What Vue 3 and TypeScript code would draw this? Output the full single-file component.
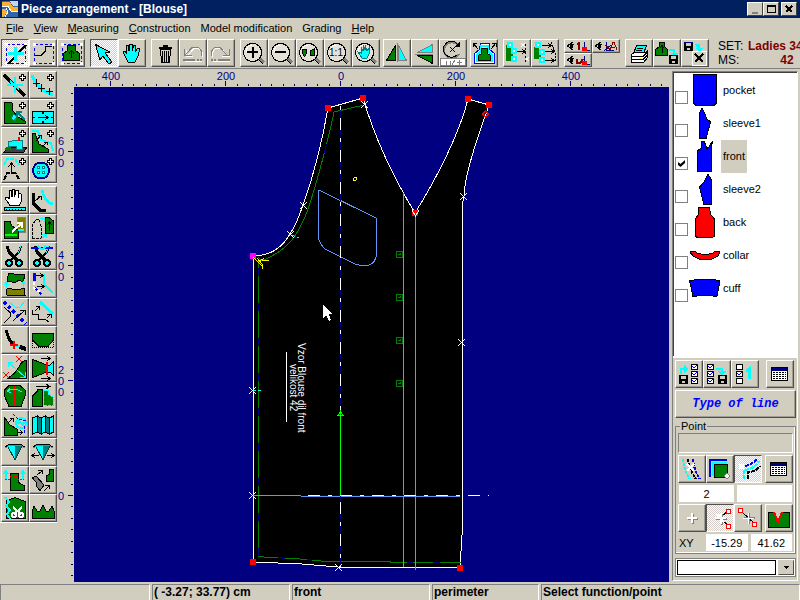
<script setup lang="ts">
import { computed, h, ref } from 'vue'

/** One painted layer of an icon: fill, stroke, stroke width, path data, optional dash pattern. */
type Layer = [fill: string, stroke: string, width: number, d: string, dash?: string]

const N = 'none'
const K = '#000000'
const C = '#00ffff'
const G = '#008000'
const R = '#ff0000'
const B = '#0000ff'
const W = '#ffffff'
const GY = '#808080'
const TEAL = '#008080'
const OLIVE = '#808000'
const NAVY = '#000080'
const MAROON = '#800000'

const plus: Layer = [W, K, 1, 'M20.5 3.5h2v2h2v2h-2v2h-2v-2h-2v-2h2z']
const frame: Layer[] = [
  [N, B, 1, 'M5.5 5.5h19v19h-19z', '3 2'],
  [W, N, 0, 'M4 4h3v3h-3zM23 4h3v3h-3zM4 23h3v3h-3zM23 23h3v3h-3z'],
]
const lens: Layer[] = [
  [N, GY, 3, 'M19 19l5 5'],
  [N, K, 1, 'M18 20l5 5'],
  ['#e4e2d8', K, 1, 'M12.5 4.5a9 9 0 1 0 .1 0z'],
  [N, W, 1, 'M6 13a7 7 0 0 1 6-7'],
]
const hand = 'M10 23L6 15L5 12L7 12L9 15L8 7L10 6L11 12L12 5L14 5L14 12L16 6L18 7L17 13L20 9L22 10L20 17L17 23z'
const disk = (x: number, y: number): Layer[] => [
  [K, N, 0, `M${x} ${y}h9v9h-9z`],
  ['#d1cec0', N, 0, `M${x + 2} ${y + 1}h5v3h-5zM${x + 3} ${y + 6}h3v2h-3z`],
]
const eye: Layer[] = [
  [N, K, 1, 'M9 3L3.500 7L9 11M4 6C6 4 8 5 10 6'],
  [K, N, 0, 'M6 5h3v4h-3z'],
]
const scissors = (c: string, rings: string): Layer[] => [
  [N, c, 3, 'M6 4L8 10L16 18'],
  [N, c, 2, 'M20 4L18 10L10 18'],
  [N, rings, 1, 'M20 4L17 11'],
  [rings, c, 2, 'M8 18a3 3 0 1 0 .1 0zM18 18a3 3 0 1 0 .1 0z'],
]
const dart: Layer[] = [
  [C, N, 0, 'M6 8L9 6L14 7V22z'],
  [TEAL, N, 0, 'M14 7L18 6L21 8L14 22z'],
  [N, '#004040', 1, 'M6.500 8L14 22L21 8'],
  [N, GY, 1, 'M4 10L9 7L14 8L19 7L24 10'],
  [N, K, 1, 'M4 9L9 6H19L24 9'],
]
const calendar: Layer[] = [
  [W, K, 1, 'M5.5 7.5h16v13h-16z'],
  [NAVY, N, 0, 'M6 8h15v3h-15z'],
  [N, K, 1, 'M7 12.5h13M7 14.5h13M7 16.5h13M7 18.5h13', '2 1'],
]
const ticks = (x: number): Layer[] => [
  [W, K, 1, `M${x}.5 4.5h6v5h-6zM${x}.5 11.5h6v5h-6zM${x}.5 18.5h6v5h-6z`],
]

const icons: Record<string, Layer[]> = {
  point: [...frame, [N, K, 2, 'M7 25L25 6'], [N, C, 3, 'M7 14.500h16M14.500 8v14']],
  curve: [...frame, [N, K, 1, 'M6 16.5H12L16.5 12V7.5H23']],
  piece: [...frame, [G, K, 1, 'M10.5 6.5h8v5l4 3v7h-16v-7l4-3z'], [N, K, 1, 'M14.5 19v-7M12 14.5l2.5-3l2.5 3']],
  select: [[C, K, 1, 'M5.5 5.5L20 13L15 14L22 23L19 25L13 17L10 21z']],
  pan: [[C, K, 1, hand]],
  trash: [
    [K, N, 0, 'M8 8h13v2h-13zM12 6h5v2h-5z'],
    ['#d1cec0', K, 1, 'M9.5 10.5h10l-1 13h-8z'],
    [N, K, 1, 'M11.500 12v11M13.500 12v11M15.500 12v11M17.500 12v11'],
  ],
  undo: [
    [N, W, 1, 'M8 17L15 9.5H20Q24.500 12 23 18M7 11v6h7M6 22.500h17'],
    [N, GY, 1, 'M6 16L13 8.500H19Q24 11 22 17M5.500 10v6.500h7'],
    [N, GY, 2, 'M4 21h12M18 21h2M21 21h2'],
  ],
  redo: [
    [N, W, 1, 'M21 17L14 9.5H9Q4.500 12 6 18M22 11v6h-7M6 22.500h17'],
    [N, GY, 1, 'M20 16L13 8.500H8Q3 11 5 17M22.500 10v6.500h-7'],
    [N, GY, 2, 'M4 21h2M7 21h2M11 21h12'],
  ],
  zoomIn: [...lens, [N, K, 2, 'M7 13h11M12.500 8v11']],
  zoomOut: [...lens, [N, K, 2, 'M7 13h11']],
  zoomAll: [...lens, [G, K, 1, 'M7 10h3l1 3l-2 4h-1l-2-4zM14 12l4-2v6h-4z']],
  zoomOne: lens,
  zoomPan: [...lens, [C, TEAL, 1, 'M10 19L6 13L9 14V8L11 12V6L13 11V6L15 12L17 9V15L15 19z']],
  mirrorH: [[G, K, 1, 'M3.5 21.500L12.500 6.500V21.500z'], [C, GY, 1, 'M15.500 6.500V21.500H23.500z'], [N, GY, 1, 'M14 4v19']],
  mirrorV: [[C, GY, 1, 'M6.500 13.500H21.500V5.500z'], [G, K, 1, 'M6.500 16.500H21.500V24.500z'], [N, GY, 1, 'M4 15h18']],
  rotate: [
    [N, GY, 2, 'M19 6A8 8 0 1 0 20 15'],
    [N, K, 1, 'M18 4.500A8 8 0 1 0 18 16M11 8l5 5M16 8l-5 5'],
    [K, N, 0, 'M21 2v6h-6z'],
    [W, GY, 1, 'M1 19.500h25v7h-25z'],
    [N, GY, 1, 'M7 22v4h4v-4M13 26l3-5M18 23h5M20.500 21v5'],
  ],
  offset: [
    [W, B, 1, 'M10.500 4.500h9v6l5 4v10h-20v-10l5-4z'],
    [N, C, 2, 'M11 7h7v5l4 4v6h-15v-6l4-4z'],
    [G, K, 1, 'M11.500 9.500h6v5l3 2v5h-12v-5l3-2z'],
    [N, K, 1, 'M3 4l5 6M3 8V4.500h4M26 4l-5 6M22 4.500h4V8'],
  ],
  moveA: [
    [G, N, 0, 'M3 6h5l2 6v10h-7z'],
    [W, C, 2, 'M5 4h4v4h-4zM9 10h4v4h-4zM9 18h4v4h-4z'],
    [N, K, 1, 'M14 12.500h8M19 10l3 2.500l-3 2.500'],
    [N, W, 1, 'M18 4l4 4M22 4l-4 4M22 18l4 4M26 18l-4 4'],
    [N, K, 1, 'M22.500 5v18', '2 2'],
  ],
  moveB: [
    [G, N, 0, 'M3 8h5l2 6v6h-7z'],
    [W, C, 2, 'M5 4h4v4h-4zM9 11h4v4h-4zM9 19h4v4h-4z'],
    [N, K, 1, 'M11 6.500h9M17 4l3 2.500l-3 2.500M14 12.500h9M20 10l3 2.500l-3 2.500M14 21.500h9M20 19l3 2.500l-3 2.500'],
    [N, K, 1, 'M20 3l4 10v9', '2 1'],
  ],
  eyeOne: [...eye, [N, MAROON, 2, 'M13 5l2-1v7'], [N, NAVY, 1, 'M20.500 3v8h5'], [R, N, 0, 'M18 8h5v4h-5z']],
  eyeAxis: [...eye, [N, NAVY, 1, 'M14.500 3v8h7M12 12l7-6'], [N, MAROON, 1, 'M13 6l7 6M18 11l3-8h1l3 8M19 8.500h4']],
  eyeBack: [...eye, [N, MAROON, 2, 'M13 6v4h3l3-4'], [N, NAVY, 1, 'M20.500 3v8h5'], [R, N, 0, 'M18 8h5v4h-5z']],
  print: [
    [C, K, 1, 'M11.500 6.500h10l-3 8h-10z'],
    [N, K, 1, 'M12 9h6M11 11.500h6'],
    [W, K, 1, 'M6.500 15.500l3-2h11l2-2v7l-4 5h-12z'],
    [N, K, 1, 'M7 17.500h11l4-4M7 20.500h11l4-4'],
    ['#ffff00', N, 0, 'M14 19h3v1h-3z'],
  ],
  saveOut: [[G, K, 1, 'M6.500 3.500h5v4l3 3v6h-12v-6l4-3z'], [N, K, 1, 'M9 14v-7M6.500 9.500l2.500-3l2.500 3'], [N, C, 2, 'M16 11h5v5'], [C, N, 0, 'M17 14h8l-4 4z'], ...disk(16, 16)],
  saveX: [...disk(3, 3), [NAVY, N, 0, 'M3 3h9v1h-9z'], [C, N, 0, 'M14 5h5v4h3l-4 4l-4-4h2z'], [N, GY, 1, 'M12 26.500h14.500v-14'], ['#d1cec0', W, 1, 'M11.500 12.500h14v14h-14z'], [N, K, 2, 'M14 15l8 8M22 15l-8 8']],
  // palette, top block
  addPoint: [[N, K, 3, 'M3 4L24 25'], [N, C, 2, 'M6 14h16M14 6v16M9 10l9 8'], plus],
  addCurve: [[N, C, 3, 'M3 4C7 15 12 19 24 24'], [N, K, 1, 'M4 12h7M7.500 8v8M9 17h7M12.500 13v8M17 20h7M20.500 17v7'], plus],
  addDart: [[G, K, 1, 'M3.500 3.500H11L12 12L17 18L24 22V24.500H3.500z'], [C, TEAL, 1, 'M10 19l3-4l3 3l-3 4z'], [N, TEAL, 2, 'M24 21L16 13M16 18v-5h5'], plus],
  addStrip: [[C, K, 1, 'M3.500 12.500H13l1 2l1-2H24.500V24.500H15l-1-2l-1 2H3.500zM3 18.500h3M22 18.500h3'], [N, K, 1, 'M9 18.500h10M16 16l3 2.500l-3 2.500'], plus],
  sew: [['#404040', K, 1, 'M7 20L3 25H23L26 20z'], [C, TEAL, 1, 'M7.500 14.500L15 13.500H21.500V22.500H15V19.500H7.500z'], [G, N, 0, 'M5 20h5v3h-6z'], [R, N, 0, 'M17 10h2v4h-2z'], plus],
  addSeam: [[G, K, 1, 'M3.500 6.500H6L10 17L19 22V25H3.500z'], [N, C, 2, 'M3 4H9L12 13L22 16L24 24'], [N, K, 1, 'M7 14l5-6M8.500 8H12v4M13 20l5-5M14.500 15H18v3'], plus],
  dartCopy: [[N, C, 2, 'M3 10L6 4H14L18 10', '4 1'], [N, K, 2, 'M3 25L6 18H14L18 24', '5 1'], [N, K, 1, 'M10.500 17V9M7 12l3.500-4l3.500 4'], plus],
  button: [[C, NAVY, 2, 'M12 7.500a8 8 0 1 0 .1 0z'], [W, TEAL, 1, 'M8.500 11.500h2v2h-2zM13.500 11.500h2v2h-2zM8.500 16.500h2v2h-2zM13.500 16.500h2v2h-2z'], plus],
  // palette, lower block
  measure: [[W, K, 1, 'M9 19.500L4.500 13V11H7L8 13V5L10 4.500L11 11V3H13.500V11L15 4H17V12L18 7L20 8V16L18 19.500z'], [C, K, 1, 'M3.500 21.500h21v3h-21z'], [N, K, 1, 'M5 23.500h18', '1 2']],
  corner: [[N, K, 3, 'M4 7V17L11 24H17'], [N, C, 3, 'M13 4C15 13 18 17 24 18'], [N, K, 1, 'M6 15l6-5M8.500 10H12v4']],
  swap: [[OLIVE, GY, 1, 'M16.500 3.500H24.500V18.500H16.500z'], [G, K, 1, 'M3.500 7.500H9L11 12L17 16V24.500H3.500z'], [C, N, 0, 'M17 15h6v2h-6z'], ['#00ff00', N, 0, 'M4 20h12v2h-12z'], [N, W, 2, 'M11 18L21 9M16 9h5v5']],
  copyPiece: [[N, K, 1, 'M3.500 24.500V11L7 5.500H10L12 12V24.500z', '3 1'], [G, K, 1, 'M16.500 3.500H20L24.500 7V19.500H16.500z'], [N, K, 1, 'M20.500 17V8M18 11l2.500-3l2.500 3'], [N, C, 1, 'M10 9l4-4M11 4.500H15V8M12 25l5-4M13 20.500H17V24']],
  cut: scissors(K, C),
  cutLine: [...scissors(K, C), [N, B, 2, 'M2 6h22'], [N, C, 2, 'M9 4l4 4M17 4l-4 4']],
  mirrorPiece: [[G, K, 1, 'M7.500 3.500L24 5L22 12L18 10L14 12.500L6 11z'], [OLIVE, K, 1, 'M5.500 19.500L8 18L14 20L23 18.500V21L24 25H6z'], [N, C, 1, 'M5.500 18v-6M3 15l2.500-3l2.500 3M22.500 18v-6M20 15l2.500-3l2.500 3']],
  moveLine: [[N, B, 3, 'M5 3v8'], [N, B, 2, 'M6 18L13 25', '3 3'], [N, W, 2, 'M5 12v6L11 22', '3 2'], [N, C, 2, 'M15 4V14L24 23'], [N, K, 1, 'M7 5.500h7M11 3l3 2.500l-3 2.500M8 16.500h7M12 14l3 2.500l-3 2.500']],
  axis: [[N, B, 4, 'M3 4L25 26', '3 3'], [N, C, 1, 'M8 4L14 9H19L24 3'], [N, K, 1, 'M3 9L9 14.500V19L3 25M12 23L24 12M19 12.500h5V17']],
  parallel: [[N, C, 3, 'M11 4L24 16'], [N, K, 1, 'M3.500 12V16.500H9V21.500H16.500L20 24M6 13l4-4M6.500 8.500H10.500V12M18 20l4-4M18 16.500H22.500V20']],
  extend: [[N, K, 3, 'M5 4C7 10 8 15 12 18'], [N, C, 2, 'M14 20h8'], [N, R, 2, 'M13 15v8M9 19h8'], [K, N, 0, 'M19 19L25 21V25L18 23z']],
  hem: [[G, K, 1, 'M3.500 7.500H24.500V14L19 20.500H10L3.500 14z'], [N, K, 1, 'M3.500 15V21.500H24.500V15', '1 1']],
  stretch: [[G, K, 1, 'M25 6.500C17 7 20 18 6 24.500H25z'], [N, C, 1, 'M7 8L24 23M7 13V8H12M24 18V23.500H19'], [N, R, 1, 'M15 2l6 6M21 2l-6 6M2 18l6 6M8 18l-6 6']],
  gather: [[G, K, 1, 'M3.500 5.500L18 11V18L3.500 23.500z'], [C, K, 1, 'M18 11H21L24.500 8V21L21 18H18z'], [N, R, 2, 'M18 8v13'], [N, K, 1, 'M12 4.500h9M18 2l3 2.500l-3 2.500M12 24.500h9M18 22l3 2.500l-3 2.500']],
  sleeve: [[G, K, 1, 'M8 3.500H19L24 8V14L20 24.500H8L3.500 14V8z'], [N, C, 1, 'M6 9Q14 5 21 10M9 6L6 9L10 11'], [N, R, 2, 'M14 4v20', '3 1']],
  widen: [[G, K, 1, 'M3.500 24.500V14L8 9.500V7.500H13V24.500z'], [G, C, 1, 'M14.500 8.500H19V12L24 15V23.500H14.500z', '3 1'], [N, K, 1, 'M7 4.500h14M17 2l4 2.500l-4 2.500']],
  detail: [[G, K, 1, 'M3.500 7.500L9 15L16 19V25H3.500z'], [N, C, 2, 'M20 8a5 5 0 1 0 .1 0zM15 13h10M17 10l6 6'], [N, B, 1, 'M12 4L17 9L25 11M23.500 16V24', '3 1'], [N, K, 1, 'M8 12l4-4M8.500 8.500H12.500V12M17 22.500h4M19 20l2 2.500l-2 2.500']],
  pleats: [[C, K, 1, 'M3.500 8L8 6V22L3.500 24zM12.500 8L16 6V22L12.500 24zM20.500 8L24.500 6V22L20.500 24z'], [TEAL, K, 1, 'M8 6L12.500 8V24L8 22zM16 6L20.500 8V24L16 22z']],
  dart,
  dartTurn: [...dart, [N, K, 1, 'M10 17.500H3M6 15l-3 2.500l3 2.500M18 17.500H25M22 15l3 2.500l-3 2.500']],
  lengthen: [[G, K, 1, 'M9.500 7.500H17V16L23.500 20V24.500H9.500z'], [N, R, 1, 'M4 13.500h19M9 10.500h9', '2 1'], [N, C, 2, 'M5 13V5M22 13V5'], [C, N, 0, 'M2 8l3-5l3 5zM19 8l3-5l3 5z']],
  rotatePiece: [[GY, K, 1, 'M3.500 12L7 10L15 19L11 24.500L7 20V16z'], [G, K, 1, 'M20.500 3.500H24.500V15.500H17V10L20.500 8z'], [N, K, 1, 'M8 9l5-4M9 4.500H13.500V8M15 25l5-5M16 19.500H20.500V23']],
  cutPiece: [[G, K, 1, 'M5.500 7L14 3.500L24 7.500V24.500H5.500z'], [N, C, 2, 'M4 3L8 8L5 12L9 16L6 20L9 25'], [N, W, 2, 'M12 13L20 20M21 13L13 20M13 19a2 2 0 1 0 .1 0M20 19a2 2 0 1 0 .1 0']],
  crown: [[G, K, 1, 'M3.500 24.500V17L5 12L8 17H11L14 11L17 17H20L23 12L25 17V24.500z']],
  // right panel
  loadSet: [...ticks(16), [N, B, 1, 'M17 6l2 2l4-4M17 13l2 2l4-4M17 20l2 2l4-4'], [N, C, 2, 'M6 14V9h4'], [C, N, 0, 'M9 5l5 4l-5 4z'], ...disk(4, 15)],
  saveSet: [...ticks(4), [N, B, 1, 'M5 6l2 2l4-4M5 13l2 2l4-4M5 20l2 2l4-4'], [N, C, 2, 'M13 9h6v3'], [C, N, 0, 'M14 11h9l-4 4z'], ...disk(15, 15)],
  oneSet: [...ticks(5), [N, B, 1, 'M6 13l2 2l4-4'], [N, C, 3, 'M15 11l3-2v10']],
  calendar,
  lines: [[N, C, 2, 'M5 4Q6 16 12 24', '3 1'], [N, K, 2, 'M10 4Q12 16 18 24', '3 1'], [N, B, 2, 'M15 4Q16 16 22 24', '3 1'], [N, W, 2, 'M9 9l7 7M16 9l-7 7']],
  layers: [[N, B, 2, 'M4 22V5H21'], [N, C, 2, 'M7 21V8H21'], [G, K, 1, 'M8.500 9.500h13v13h-13z'], [W, GY, 1, 'M21 18l3 3l-3 3l-3-3z']],
  fan: [[N, B, 2, 'M6 11Q16 12 23 4', '4 1'], [N, C, 2, 'M10 24V15Q20 14 25 6', '4 1'], [N, K, 2, 'M14 24V17Q22 17 26 11', '4 1'], [W, N, 0, 'M5 9h5v5h-5z']],
  plain: [[N, GY, 2, 'M15 10v10M10 15h10'], [N, W, 2, 'M14 9v10M9 14h10']],
  near: [[N, K, 1, 'M15 13L22 7M15 15L22 21'], [N, GY, 2, 'M10 15h11M16 10v11'], [N, W, 2, 'M9 14h11M15 9v11M11 10l7 8'], [W, R, 1, 'M20.500 5.500h4v4h-4zM20.500 20.500h4v4h-4z']],
  between: [[N, K, 1, 'M7 7L21 20'], [N, GY, 2, 'M15 9v11M10 14h11'], [N, W, 1, 'M14 9v11M9 14h11'], [W, R, 1, 'M4.500 4.500h4v4h-4zM18.500 18.500h4v4h-4z']],
  notch: [[G, K, 1, 'M3.500 8.500H9L13 18L17 8.500H24.500V23.500H3.500z'], [N, R, 2, 'M9 8L13 18L17 8']],
}

const Glyph = (p: { name: string; short?: boolean }) =>
  h(
    'svg',
    { class: 'glyph', viewBox: p.short ? '1 1 26 12' : '1 1 26 26', width: 26, height: p.short ? 12 : 26, 'aria-hidden': 'true' },
    [
      ...icons[p.name].map(([fill, stroke, width, d, dash]) =>
        h('path', { d, fill, stroke, 'stroke-width': width, 'stroke-dasharray': dash }),
      ),
      p.name === 'zoomOne' ? h('text', { class: 'ratio', x: 12, y: 17, 'text-anchor': 'middle' }, '1:1') : null,
    ],
  )
Glyph.props = ['name', 'short']

const menus = ['File', 'View', 'Measuring', 'Construction', 'Model modification', 'Grading', 'Help']

interface Group { items: string[]; snug?: boolean; half?: boolean }
const groups: Group[] = [
  { items: ['point', 'curve', 'piece'] },
  { items: ['select', 'pan'] },
  { items: ['trash', 'undo', 'redo'] },
  { items: ['zoomIn', 'zoomOut', 'zoomAll', 'zoomOne', 'zoomPan'] },
  { items: ['mirrorH', 'mirrorV', 'rotate'], snug: true },
  { items: ['offset'], snug: true },
  { items: ['moveA', 'moveB'] },
  { items: ['eyeOne', 'eyeAxis', 'eyeBack'], half: true },
  { items: ['print', 'saveOut', 'saveX'] },
]
const pressed = ref(new Set(['point', 'select', 'fan', 'near']))

const palettes = [
  ['addPoint', 'addCurve', 'addDart', 'addStrip', 'sew', 'addSeam', 'dartCopy', 'button'],
  [
    'measure', 'corner', 'swap', 'copyPiece', 'cut', 'cutLine', 'mirrorPiece', 'moveLine', 'axis', 'parallel', 'extend', 'hem',
    'stretch', 'gather', 'sleeve', 'widen', 'detail', 'pleats', 'dart', 'dartTurn', 'lengthen', 'rotatePiece', 'cutPiece', 'crown',
  ],
]

interface Piece { name: string; fill: string; d: string; on: boolean }
const pieces = ref<Piece[]>([
  { name: 'pocket', fill: B, on: false, d: 'M4.500 .5H27.500V29L25 31.500H7L4.500 29z' },
  { name: 'sleeve1', fill: B, on: false, d: 'M13 1L10.500 6V31.500H17L21.500 15L18 12L15 5z' },
  { name: 'front', fill: B, on: true, d: 'M13 1H15L18 8.500L20 7L23.500 1L22 9V31.500H8.500V11L12 8z' },
  { name: 'sleeve2', fill: B, on: false, d: 'M19 1L22 6V31.500H15L10.500 14L15 9z' },
  { name: 'back', fill: R, on: false, d: 'M10 1.500H20L22 9L25.500 13V30L23 31.500H8L6.500 30V13L9 9z' },
  { name: 'collar', fill: R, on: false, d: 'M1 13L6 12L8 14Q16 17 24 14L26 12L31 13L29 17L22 20.500H11L4 17z' },
  { name: 'cuff', fill: B, on: false, d: 'M.5 8.500L9 7.500H23L31 8.500L28 24.500L16 23L4 24.500z' },
])
const current = computed(() => pieces.value.find((p) => p.on)?.name ?? '')

const PITCH = 11.48
const topTicks = Array.from({ length: 52 }, (_, i) => {
  const n = i - 23
  return { x: Math.round(340 + n * PITCH), major: n % 10 === 0, label: Math.abs(n * 20) }
})
const sideTicks = Array.from({ length: 43 }, (_, i) => {
  const n = i - 7
  return { y: Math.round(495 - n * PITCH), major: n % 10 === 0, digits: String(Math.abs(n * 20)).split('') }
})

const crosses = [[303, 205], [290, 234], [463, 196], [364, 104], [252, 390], [461, 342], [252, 495], [338, 567]]
const handles = [[328, 108], [363, 98], [468, 99], [489, 105], [415, 213], [253, 562], [460, 568]]
const buttonholes = [254, 297, 340, 383]

const body =
  'M253 256C276 256 286 241 290 234C296 225 300 214 303 205C312 180 322 143 328 108L363 98C376 142 395 180 415 213' +
  'C438 176 460 132 468 99L489 105C478 137 465 172 464 196L462 207V535L460 567H338L302 564L253 562V530V257z'
const armhole = 'M364 105L334 112C330 132 318 180 307 212C299 232 290 250 261 261L258 262'
const sideSeam = 'M258.500 262V556'
const hemline = 'M258 556L264 557L300 559L326 561.500H390L391 562.500H461'
const pocket = 'M319 190L376 218V257Q374 266 363 266L355 264L325 249Q319 243 318 236V210z'

const xValue = ref('-15.29')
const yValue = ref('41.62')
const first = ref('2')
const second = ref('')
const statuses = computed(() => ['', '( -3.27; 33.77) cm', current.value, 'perimeter', 'Select function/point'])
</script>

<template>
  <div class="app">
    <header class="title">
      <svg class="logo" viewBox="0 0 16 16" width="16" height="16" aria-hidden="true">
        <path d="M0 0H16V16H0z" fill="#2f66a8" />
        <path d="M0 1H8L11 6H16V10H9L6 5L0 6z" fill="#f8b030" />
        <path d="M0 6L6 5L9 10H16M4 7L6 11L3 16" fill="none" stroke="#fff" />
        <path d="M0 8H4L5 11L2 16H0z" fill="#f8b030" />
        <path d="M8 0H16V5H11z" fill="#c4d6ea" />
      </svg>
      <h1>Piece arrangement - [Blouse]</h1>
      <div class="window">
        <button type="button" aria-label="Minimize"><svg viewBox="0 0 14 12" width="14" height="12"><path d="M4 10h6" stroke="#808080" stroke-width="2" /></svg></button>
        <button type="button" aria-label="Maximize"><svg viewBox="0 0 14 12" width="14" height="12"><path d="M3 2.500h8v7h-8zM3 3h8" fill="none" stroke="#000" /></svg></button>
        <button type="button" class="close" aria-label="Close"><svg viewBox="0 0 14 12" width="14" height="12"><path d="M4 3l6 6M10 3l-6 6" stroke="#000" stroke-width="2" /></svg></button>
      </div>
    </header>

    <nav class="menu">
      <button v-for="m in menus" :key="m" type="button"><u v-if="!/^(Mod|Gra)/.test(m)">{{ m[0] }}</u><template v-else>{{ m[0] }}</template>{{ m.slice(1) }}</button>
    </nav>

    <div class="toolbar">
      <div v-for="(g, i) in groups" :key="i" class="group" :class="{ snug: g.snug, half: g.half }">
        <button v-for="name in g.items" :key="name" type="button" class="tool" :class="{ pressed: pressed.has(name) }" :aria-label="name">
          <Glyph :name="name" :short="g.half" />
        </button>
      </div>
      <dl class="set">
        <dt>SET:</dt><dd>Ladies 34</dd>
        <dt>MS:</dt><dd class="size">42</dd>
      </dl>
    </div>

    <main class="work">
      <aside class="palette">
        <div v-for="(block, i) in palettes" :key="i" class="block">
          <button v-for="name in block" :key="name" type="button" class="tool" :aria-label="name"><Glyph :name="name" /></button>
        </div>
      </aside>

      <svg class="ruler-top" viewBox="74 70 595 17" preserveAspectRatio="xMidYMax meet">
        <g v-for="t in topTicks" :key="t.x">
          <rect :x="t.x" :y="t.major ? 81 : 84" width="1" :height="t.major ? 5 : 2" />
          <text v-if="t.major" :x="t.x + 1" y="80" text-anchor="middle">{{ t.label }}</text>
        </g>
      </svg>

      <svg class="ruler-side" viewBox="57 87 17 495" preserveAspectRatio="xMaxYMid meet">
        <g v-for="t in sideTicks" :key="t.y">
          <rect :x="t.major ? 68 : 71" :y="t.y" :width="t.major ? 5 : 2" height="1" />
          <template v-if="t.major">
            <text v-for="(d, k) in t.digits" :key="k" x="61" :y="t.y + 5 + (k - (t.digits.length - 1) / 2) * 11" text-anchor="middle">{{ d }}</text>
          </template>
        </g>
      </svg>

      <svg class="drawing" viewBox="74 87 595 495" role="img" aria-label="front">
        <path :d="body" fill="#000" stroke="#fff" />
        <g fill="none" stroke="#000080">
          <path :d="armhole" />
          <path :d="sideSeam" />
          <path :d="hemline" />
        </g>
        <g fill="none" stroke="#008000">
          <path :d="armhole" stroke-dasharray="64 9 200" />
          <path :d="sideSeam" stroke-dasharray="27 8" stroke-dashoffset="21" />
          <path :d="hemline" stroke-dasharray="20 7 22 5 96 6" />
        </g>
        <path :d="pocket" fill="none" stroke="#5f96f8" />
        <path d="M403.500 193V567M415.500 214V570M253 495.500H301M301 496.500H460" fill="none" stroke="#5f96f8" />
        <path d="M340.500 106V567M308 495.500H460" stroke="#000080" />
        <path d="M340.500 106V567" stroke="#fff" stroke-dasharray="12 8 4 8" stroke-dashoffset="20" />
        <path d="M308 495.500H489" stroke="#fff" stroke-dasharray="12 8 4 8" />
        <path d="M340.500 495V411M338 415.500L340.500 411L343 415.500z" stroke="#00ff00" fill="none" />
        <g v-for="y in buttonholes" :key="y">
          <path :d="`M396.500 ${y - 2.500}h6v6h-6zM398 ${y + .5}h3M400.500 ${y - 1}v2`" fill="none" stroke="#008000" />
        </g>
        <rect v-for="([x, y], k) in handles" :key="'h' + k" :x="x - 3" :y="y - 3" width="6" height="6" fill="#f00" />
        <rect x="250" y="253" width="6" height="6" fill="#f0f" />
        <path d="M412 210L415.500 216L419 210" fill="none" stroke="#fff" />
        <path v-for="([x, y], k) in crosses" :key="'c' + k" :d="`M${x - 3} ${y - 3}l7 7M${x + 4} ${y - 3}l-7 7`" stroke="#fff" />
        <path d="M485.500 111l3 3l-3 3l-3-3z" fill="none" stroke="#f00" />
        <path d="M292 235L299 238M253 390.500H261" stroke="#0ff" fill="none" stroke-dasharray="3 2" />
        <path d="M253 257L262 266M257 258L262 264M258 263L264 258M262 264V269M260 260H269" stroke="#ff0" />
        <path d="M258 257L262 261" stroke="#f00" />
        <circle cx="355" cy="179" r="1.5" fill="none" stroke="#ff0" />
        <path d="M286.500 352V422" stroke="#fff" />
        <text class="mark" transform="translate(298 343) rotate(90)">Vzor Blouse dil front</text>
        <text class="mark" transform="translate(290 364) rotate(90)">velikost 42</text>
        <path d="M323 304V318L326 315L329 321L331 320L329 314H332z" fill="#fff" />
      </svg>

      <aside class="side">
        <ul class="pieces">
          <li v-for="p in pieces" :key="p.name">
            <input :id="p.name" v-model="p.on" type="checkbox" />
            <svg viewBox="0 0 32 33" width="32" height="33" aria-hidden="true"><path :d="p.d" :fill="p.fill" stroke="#000" /></svg>
            <label :for="p.name" :class="{ active: p.on }">{{ p.name }}</label>
          </li>
        </ul>

        <div class="controls">
          <div class="row">
            <button v-for="name in ['loadSet', 'saveSet', 'oneSet', 'calendar']" :key="name" type="button" class="tool" :aria-label="name"><Glyph :name="name" /></button>
          </div>
          <button type="button" class="line-type">Type of line</button>
          <fieldset>
            <legend>Point</legend>
            <div class="well"></div>
            <div class="row">
              <button v-for="name in ['lines', 'layers', 'fan', 'calendar']" :key="name" type="button" class="tool" :class="{ pressed: pressed.has(name) }" :aria-label="name"><Glyph :name="name" /></button>
            </div>
            <div class="pair">
              <input v-model="first" type="text" aria-label="Point number" />
              <input v-model="second" type="text" aria-label="Point name" />
            </div>
            <div class="row">
              <button v-for="name in ['plain', 'near', 'between', 'notch']" :key="name" type="button" class="tool" :class="{ pressed: pressed.has(name) }" :aria-label="name"><Glyph :name="name" /></button>
            </div>
            <div class="xy">
              <label for="px">XY</label>
              <input id="px" v-model="xValue" type="text" />
              <input v-model="yValue" type="text" aria-label="Y" />
            </div>
          </fieldset>
          <div class="combo">
            <select aria-label="Point list"><option></option></select>
            <span class="arrow" aria-hidden="true"><svg viewBox="0 0 5 3" width="5" height="3"><path d="M0 0H5L2.500 3z" /></svg></span>
          </div>
        </div>
      </aside>
    </main>

    <footer class="status">
      <span v-for="(s, i) in statuses" :key="i">{{ s }}</span>
    </footer>
  </div>
</template>

<style>
body {
  margin: 0;
  background: #d1cec0;
}
</style>

<style scoped>
.app {
  display: flex;
  flex-direction: column;
  min-height: 100vh;
  overflow: hidden;
  background: #d1cec0;
  color: #000;
  font: 11px/12px "Liberation Sans", Arial, sans-serif;
}
button,
input,
select {
  box-sizing: border-box;
  margin: 0;
  padding: 0;
  border: 0;
  border-radius: 0;
  color: inherit;
  font: inherit;
}
svg {
  display: block;
  shape-rendering: crispEdges;
}

.title {
  display: flex;
  align-items: center;
  height: 18px;
  padding: 0 3px 0 2px;
  background: #00205f;
  color: #fff;
}
.title h1 {
  flex: 1;
  margin: 0 0 0 3px;
  font-size: 12px;
  line-height: 18px;
}
.window {
  display: flex;
}
.window button {
  width: 16px;
  height: 14px;
  border: 1px solid;
  border-color: #fff #404040 #404040 #fff;
  background: #d1cec0;
}
.window .close {
  margin-left: 2px;
}

.menu {
  display: flex;
  gap: 10px;
  height: 20px;
  padding-left: 6px;
}
.menu button {
  background: none;
  white-space: nowrap;
}

.toolbar {
  display: flex;
  gap: 5px;
  padding: 1px 0 1px 1px;
  border-bottom: 1px solid #808080;
  margin-bottom: 1px;
}
.group {
  display: flex;
  flex: none;
}
.group.snug {
  margin-left: -2px;
}
.group.half {
  flex-wrap: wrap;
  width: 56px;
}
.tool {
  flex: none;
  width: 28px;
  height: 28px;
  border: 1px solid;
  border-color: #fff #505050 #505050 #fff;
  background: #d1cec0;
  box-shadow: inset -1px -1px #a09e94;
  overflow: hidden;
}
.half .tool {
  height: 14px;
}
.pressed {
  border-color: #505050 #fff #fff #505050;
  background: repeating-conic-gradient(#fff 0 25%, #d6ccc8 0 50%) 0 0 / 2px 2px;
  box-shadow: none;
}
:deep(.glyph) {
  display: block;
  shape-rendering: crispEdges;
}
:deep(.ratio) {
  font-size: 10px;
}
.set {
  display: grid;
  grid-template-columns: 30px 1fr;
  flex: 1;
  min-width: 0;
  margin: 0 0 0 4px;
  overflow: hidden;
  font-size: 12px;
  line-height: 14px;
  white-space: nowrap;
}
.set dd {
  margin: 0;
  color: #800000;
  font-weight: 700;
}
.set .size {
  padding-right: 9px;
  text-align: right;
}

.work {
  display: grid;
  flex: 1;
  grid-template-columns: 57px 17px minmax(0, 1fr) 131px;
  grid-template-rows: 17px minmax(0, 1fr);
}
.palette {
  grid-row: 1 / 3;
  padding-top: 1px;
}
.block {
  display: flex;
  flex-wrap: wrap;
  padding-left: 1px;
  border-bottom: 1px solid #fff;
  margin-bottom: 2px;
}
.ruler-top {
  grid-column: 3;
  width: 100%;
  height: 17px;
}
.ruler-side {
  grid-column: 2;
  grid-row: 2;
  width: 17px;
  height: 100%;
}
.ruler-top,
.ruler-side {
  fill: #000080;
  font-size: 11px;
}
.drawing {
  grid-column: 3;
  grid-row: 2;
  width: 100%;
  height: 100%;
  background: #000080;
}
.mark {
  fill: #fff;
  font-size: 10px;
}

.side {
  display: flex;
  grid-column: 4;
  grid-row: 1 / 3;
  flex-direction: column;
  margin: 1px 2px 1px 3px;
  border: 1px solid #808080;
  border-right-color: #fff;
  border-bottom-color: #fff;
}
.pieces {
  flex: 1;
  margin: 0;
  padding: 1px 0 0 1px;
  border: solid #404040;
  border-width: 1px 0 0 1px;
  background: #fff;
  list-style: none;
}
.pieces li {
  display: flex;
  height: 33px;
}
.pieces input {
  display: grid;
  flex: none;
  place-items: center;
  width: 13px;
  height: 13px;
  margin: 17px 1px 0 0;
  border: 1px solid #808080;
  appearance: none;
}
.pieces input:checked::before {
  width: 7px;
  height: 7px;
  background: #000;
  clip-path: polygon(0 29%, 36% 58%, 100% 0, 100% 43%, 36% 100%, 0 72%);
  content: "";
}
.pieces svg {
  flex: none;
}
.pieces label {
  padding: 0 2px;
  line-height: 33px;
}
.pieces .active {
  background: #d1cec0;
}

.controls {
  display: flex;
  flex-direction: column;
  gap: 2px;
  padding: 2px 1px 3px 2px;
  border-top: 2px solid #fff;
}
.row {
  display: flex;
}
.row .tool:last-child {
  margin-left: auto;
}
.controls > .row {
  padding-right: 2px;
}
.line-type {
  height: 28px;
  border: 1px solid;
  border-color: #fff #505050 #505050 #fff;
  background: #d1cec0;
  box-shadow: inset -1px -1px #a09e94;
  color: #0000ff;
  font: italic bold 12px "Liberation Mono", "Courier New", monospace;
}
fieldset {
  display: flex;
  flex-direction: column;
  gap: 2px;
  min-width: 0;
  margin: 0;
  padding: 1px 2px 2px;
  border: 1px solid #808080;
  box-shadow: inset -1px -1px #fff;
}
legend {
  margin-left: 2px;
  padding: 0 1px;
}
.well {
  height: 18px;
  border: 1px solid;
  border-color: #808080 #fff #fff #808080;
}
.pair,
.xy {
  display: grid;
  grid-template-columns: 1fr 1fr;
  gap: 3px;
  padding: 0 1px;
}
.xy {
  grid-template-columns: 24px 1fr 1fr;
  align-items: center;
}
.pair input,
.xy input {
  width: 100%;
  height: 17px;
  background: #fff;
  text-align: center;
}
.combo {
  display: flex;
  margin-top: 2px;
  padding: 1px;
  border: 1px solid #808080;
  background: #fff;
}
.combo select {
  flex: 1;
  height: 15px;
  border: 1px solid #000;
  background: #fff;
  appearance: none;
}
.arrow {
  display: grid;
  place-items: center;
  width: 14px;
  margin-left: 2px;
  border: 1px solid;
  border-color: #d1cec0 #505050 #505050 #d1cec0;
  background: #d1cec0;
}

.status {
  display: grid;
  grid-template-columns: 150fr 138fr 138fr 107fr 259fr;
  gap: 2px;
  height: 16px;
  padding-top: 2px;
  font-size: 12px;
  font-weight: 700;
  line-height: 15px;
  white-space: nowrap;
}
.status span {
  min-width: 0;
  padding-left: 1px;
  border: solid;
  border-width: 1px;
  border-color: #808080 #fff #d1cec0 #808080;
}
</style>
